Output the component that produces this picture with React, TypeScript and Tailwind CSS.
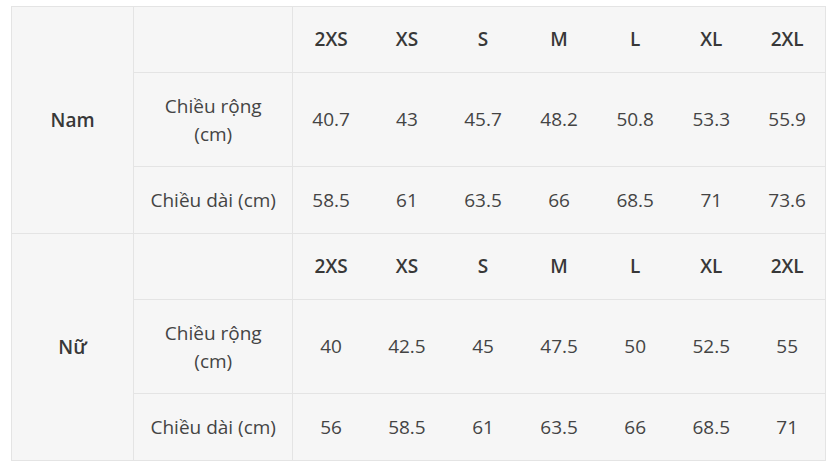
import React from "react";

const sizes = ["2XS", "XS", "S", "M", "L", "XL", "2XL"];

const groups = [
  {
    name: "Nam",
    width: ["40.7", "43", "45.7", "48.2", "50.8", "53.3", "55.9"],
    length: ["58.5", "61", "63.5", "66", "68.5", "71", "73.6"],
  },
  {
    name: "Nữ",
    width: ["40", "42.5", "45", "47.5", "50", "52.5", "55"],
    length: ["56", "58.5", "61", "63.5", "66", "68.5", "71"],
  },
];

export default function App() {
  return (
    <div className="w-[839px] h-[472px] bg-white pt-[6px] pl-[11px] font-['Open_Sans','Noto_Sans',sans-serif] text-[19px] text-[#444444]">
      <table className="border-collapse table-fixed w-[815px] bg-[#f6f6f6] border border-[#e4e4e4]">
        <colgroup>
          <col className="w-[122px]" />
          <col className="w-[159px]" />
          {sizes.map((s) => (
            <col key={s} className="w-[76px]" />
          ))}
        </colgroup>
        <tbody>
          {groups.map((g) => (
            <React.Fragment key={g.name}>
              <tr className="h-[66px] border-t border-[#e4e4e4]">
                <td rowSpan={3} className="text-center align-middle font-semibold text-[#383838] border-r border-[#e4e4e4]">
                  {g.name}
                </td>
                <td className="border-r border-[#e4e4e4]"></td>
                {sizes.map((s) => (
                  <td key={s} className="text-center align-middle font-semibold text-[#383838]">
                    {s}
                  </td>
                ))}
              </tr>
              <tr className="h-[94px] border-t border-[#e4e4e4]">
                <td className="text-center align-middle px-[14px] leading-[28px] border-r border-[#e4e4e4]">
                  Chiều rộng (cm)
                </td>
                {g.width.map((v, i) => (
                  <td key={i} className="text-center align-middle">
                    {v}
                  </td>
                ))}
              </tr>
              <tr className="h-[67px] border-t border-[#e4e4e4]">
                <td className="text-center align-middle px-[6px] border-r border-[#e4e4e4] whitespace-nowrap">
                  Chiều dài (cm)
                </td>
                {g.length.map((v, i) => (
                  <td key={i} className="text-center align-middle">
                    {v}
                  </td>
                ))}
              </tr>
            </React.Fragment>
          ))}
        </tbody>
      </table>
    </div>
  );
}
